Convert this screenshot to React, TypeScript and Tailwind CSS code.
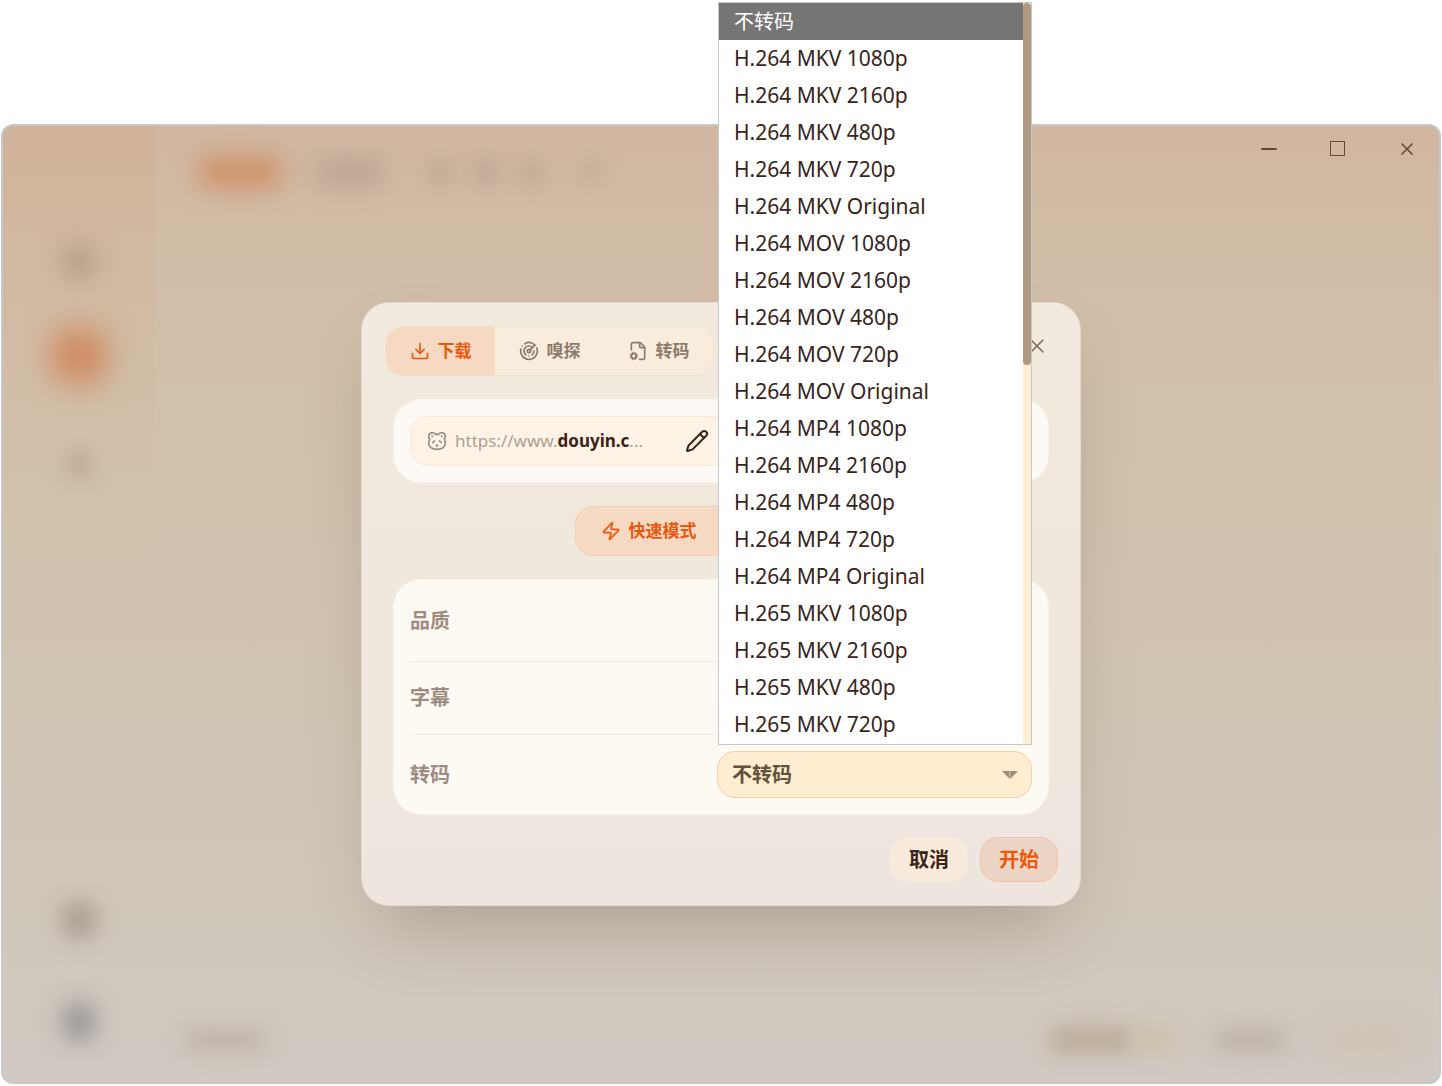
import React, { useState } from 'react';
import { Download, FileCog, Minus, Panda, Pencil, Radar, X, Zap } from 'lucide-react';

const tabs = [
  { id: 'download', label: '下载', icon: Download },
  { id: 'sniff', label: '嗅探', icon: Radar },
  { id: 'transcode', label: '转码', icon: FileCog },
];

const formats = [
  '不转码',
  'H.264 MKV 1080p',
  'H.264 MKV 2160p',
  'H.264 MKV 480p',
  'H.264 MKV 720p',
  'H.264 MKV Original',
  'H.264 MOV 1080p',
  'H.264 MOV 2160p',
  'H.264 MOV 480p',
  'H.264 MOV 720p',
  'H.264 MOV Original',
  'H.264 MP4 1080p',
  'H.264 MP4 2160p',
  'H.264 MP4 480p',
  'H.264 MP4 720p',
  'H.264 MP4 Original',
  'H.265 MKV 1080p',
  'H.265 MKV 2160p',
  'H.265 MKV 480p',
  'H.265 MKV 720p',
];

// the main window, out of focus while the dialog is open
function Backdrop() {
  return (
    <div className="absolute inset-0 overflow-hidden rounded-xl border-2 border-[#c8c8c8] bg-[linear-gradient(#d1b6a1,#d1bca6_12%,#d1c1ac_33%,#d0c5b3_60%,#d1c9c2)]">
      <div className="flex h-full">
        <div className="flex w-[152px] flex-col items-center justify-between bg-linear-to-b from-[#d09a70]/15 via-transparent to-transparent pt-[120px] pb-[40px]">
          <div className="flex flex-col items-center">
            <div className="h-8 w-8 rounded-full bg-[#9c8072]/60 blur-[12px]" />
            <div className="mt-[50px] h-14 w-14 rounded-2xl bg-[#cf8355]/80 blur-[14px]" />
            <div className="mt-[68px] h-6 w-6 rounded-full bg-[#9c8072]/45 blur-[10px]" />
          </div>
          <div className="flex flex-col items-center gap-[64px]">
            <div className="h-9 w-9 rounded-full bg-[#8a7d72]/65 blur-[12px]" />
            <div className="h-10 w-8 rounded-full bg-[#7f8082]/75 blur-[12px]" />
          </div>
        </div>
        <div className="flex flex-1 flex-col justify-between pt-[28px] pb-[26px]">
          <div className="flex h-9 items-center pl-[43px]">
            <div className="h-8 w-[84px] rounded-xl bg-[#cf8a5c]/80 blur-[12px]" />
            <div className="ml-[34px] h-6 w-[68px] rounded-xl bg-[#a69683]/60 blur-[12px]" />
            <div className="ml-[44px] h-6 w-6 rounded-full bg-[#b3a08a]/70 blur-[10px]" />
            <div className="ml-[22px] h-6 w-6 rounded-full bg-[#a89684]/60 blur-[10px]" />
            <div className="ml-[22px] h-6 w-6 rounded-full bg-[#b3a08a]/70 blur-[10px]" />
            <div className="ml-[34px] h-6 w-6 rounded-full bg-[#b8a892]/60 blur-[10px]" />
          </div>
          <div className="flex h-8 items-center pr-[30px] pl-[28px]">
            <div className="h-6 w-[84px] rounded-xl bg-[#b5a99a]/60 blur-[10px]" />
            <div className="ml-auto h-7 w-[84px] rounded-xl bg-[#b3a38c]/70 blur-[10px]" />
            <div className="h-7 w-[40px] rounded-xl bg-[#cfbda2]/70 blur-[10px]" />
            <div className="ml-[40px] h-6 w-[74px] rounded-xl bg-[#b0a59a]/60 blur-[10px]" />
            <div className="ml-[38px] h-7 w-[84px] rounded-xl bg-[#cebfab]/50 blur-[12px]" />
          </div>
        </div>
      </div>
    </div>
  );
}

function WindowControls() {
  return (
    <div className="absolute top-0.5 right-0 flex text-[#634a3c]">
      <button type="button" aria-label="最小化" className="flex h-[45px] w-[69px] items-center justify-center">
        <Minus size={24} strokeWidth={2} />
      </button>
      <button type="button" aria-label="最大化" className="flex h-[45px] w-[69px] items-center justify-center">
        <span className="h-[15px] w-[15px] border border-[#634a3c]" />
      </button>
      <button type="button" aria-label="关闭" className="flex h-[45px] w-[69px] items-center justify-center">
        <X size={20} strokeWidth={2} />
      </button>
    </div>
  );
}

function FormatSelect() {
  const [format, setFormat] = useState('不转码');

  return (
    <div className="relative w-[315px]">
      <select
        id="format"
        value={format}
        onChange={(e) => setFormat(e.target.value)}
        className="h-[47px] w-full appearance-none rounded-[18px] border border-[#f8cda2] bg-[#feedd0] px-[14px] text-[20px] font-bold text-[#64503f] outline-none"
      >
        {formats.map((item) => (
          <option key={item}>{item}</option>
        ))}
      </select>
      <svg className="pointer-events-none absolute top-5 right-[14px]" width="16" height="8" viewBox="0 0 16 8">
        <path d="M0 0h7.6v8zM8.2 0H16L8.2 8z" fill="#a08d79" />
      </svg>
      <div className="absolute right-0 bottom-full left-px mb-1.5 flex border border-[#c8c8c8] bg-white">
        <ul role="listbox" aria-label="转码" className="flex-1 pb-px">
          {formats.map((item) => (
            <li
              key={item}
              role="option"
              aria-selected={item === format}
              onClick={() => setFormat(item)}
              className={
                item === format
                  ? 'h-[37px] bg-[#757575] pl-[15px] text-[20px] leading-[37px] text-white'
                  : 'h-[37px] pl-[15px] text-[21px] leading-[37px] text-[#38241a]'
              }
            >
              {item}
            </li>
          ))}
        </ul>
        <div className="w-2 bg-[#feefd3]">
          <div className="h-[362px] rounded-full bg-[#b19a82]" />
        </div>
      </div>
    </div>
  );
}

function TaskDialog() {
  const [tab, setTab] = useState('download');

  return (
    <div
      role="dialog"
      aria-label="下载"
      className="w-[720px] max-w-full rounded-[28px] border border-[#e6d9cc] bg-linear-to-b from-[#f2e9df] via-[#f0e8dd] to-[#eee5df] p-[23px] shadow-[0_36px_72px_-20px_rgba(90,70,55,0.32)]"
    >
      <div className="flex items-start justify-between">
        <div className="flex h-[50px] overflow-hidden rounded-[18px] border border-[#f1e2cf] bg-[#f8ecdc]">
          {tabs.map(({ id, label, icon: Icon }) => (
            <button
              key={id}
              type="button"
              onClick={() => setTab(id)}
              className={
                tab === id
                  ? 'flex w-[109px] items-center justify-center gap-2 bg-[#f6d9c2] text-[17px] font-bold text-[#ea580c]'
                  : 'flex w-[109px] items-center justify-center gap-2 text-[17px] font-bold text-[#8b7a6d]'
              }
            >
              <Icon size={20} strokeWidth={2} />
              {label}
            </button>
          ))}
        </div>
        <button type="button" aria-label="关闭" className="flex h-10 w-10 items-center justify-center text-[#7c695c]">
          <X size={24} strokeWidth={1.5} />
        </button>
      </div>

      <div className="mx-2 mt-[23px] rounded-[28px] border border-[#fbf4ec] bg-[#fdf9f4] p-4">
        <div className="flex h-[50px] items-center rounded-[18px] border border-[#f5e9da] bg-[#fef3e6] pl-4">
          <Panda size={20} strokeWidth={2} className="text-[#9c8b7e]" />
          <a href="https://www.douyin.com" className="ml-2 w-[196px] text-[17px] text-[#ae9f93]">
            https://www.<b className="text-[#3b2417]">douyin.c</b>...
          </a>
          <button type="button" aria-label="编辑" className="ml-[34px] text-[#3b2417]">
            <Pencil size={24} strokeWidth={2} />
          </button>
        </div>
      </div>

      <div className="mx-auto mt-[23px] flex h-[50px] w-[292px] rounded-[18px] border border-[#f1cfb4] bg-[#f5d9c3]">
        <button
          type="button"
          className="flex w-1/2 items-center justify-center gap-2 text-[17px] font-bold text-[#ea580c]"
        >
          <Zap size={20} strokeWidth={2} />
          快速模式
        </button>
      </div>

      <div className="mx-2 mt-[23px] rounded-[28px] border border-[#fbf4ec] bg-[#fdf9f3] p-4 text-[20px] font-bold text-[#9c8c82]">
        <div className="flex h-[66px] items-start border-b border-[#f0e9e1]">
          <span className="leading-[50px]">品质</span>
        </div>
        <div className="flex h-[73px] items-center border-b border-[#f0e9e1]">
          <span className="leading-[50px]">字幕</span>
        </div>
        <div className="flex items-center justify-between pt-4">
          <label htmlFor="format" className="leading-[47px]">
            转码
          </label>
          <div className="font-normal">
            <FormatSelect />
          </div>
        </div>
      </div>

      <div className="mt-[22px] -mr-px flex justify-end gap-3">
        <button type="button" className="h-[45px] rounded-[18px] bg-[#f9ebdc] px-[19px] text-[20px] font-bold text-[#3b2417]">
          取消
        </button>
        <button
          type="button"
          className="h-[45px] rounded-[18px] border border-[#efc2a8] bg-[#edd5c5] px-[18px] text-[20px] font-bold text-[#ea580c]"
        >
          开始
        </button>
      </div>
    </div>
  );
}

function App() {
  return (
    <div className="flex h-screen flex-col bg-white px-px pt-[124px] pb-0.5 font-['Noto_Sans','Noto_Sans_CJK_SC',sans-serif]">
      <div className="relative flex flex-1 items-center justify-center">
        <Backdrop />
        <WindowControls />
        <div className="relative">
          <TaskDialog />
        </div>
      </div>
    </div>
  );
}

export default App;
